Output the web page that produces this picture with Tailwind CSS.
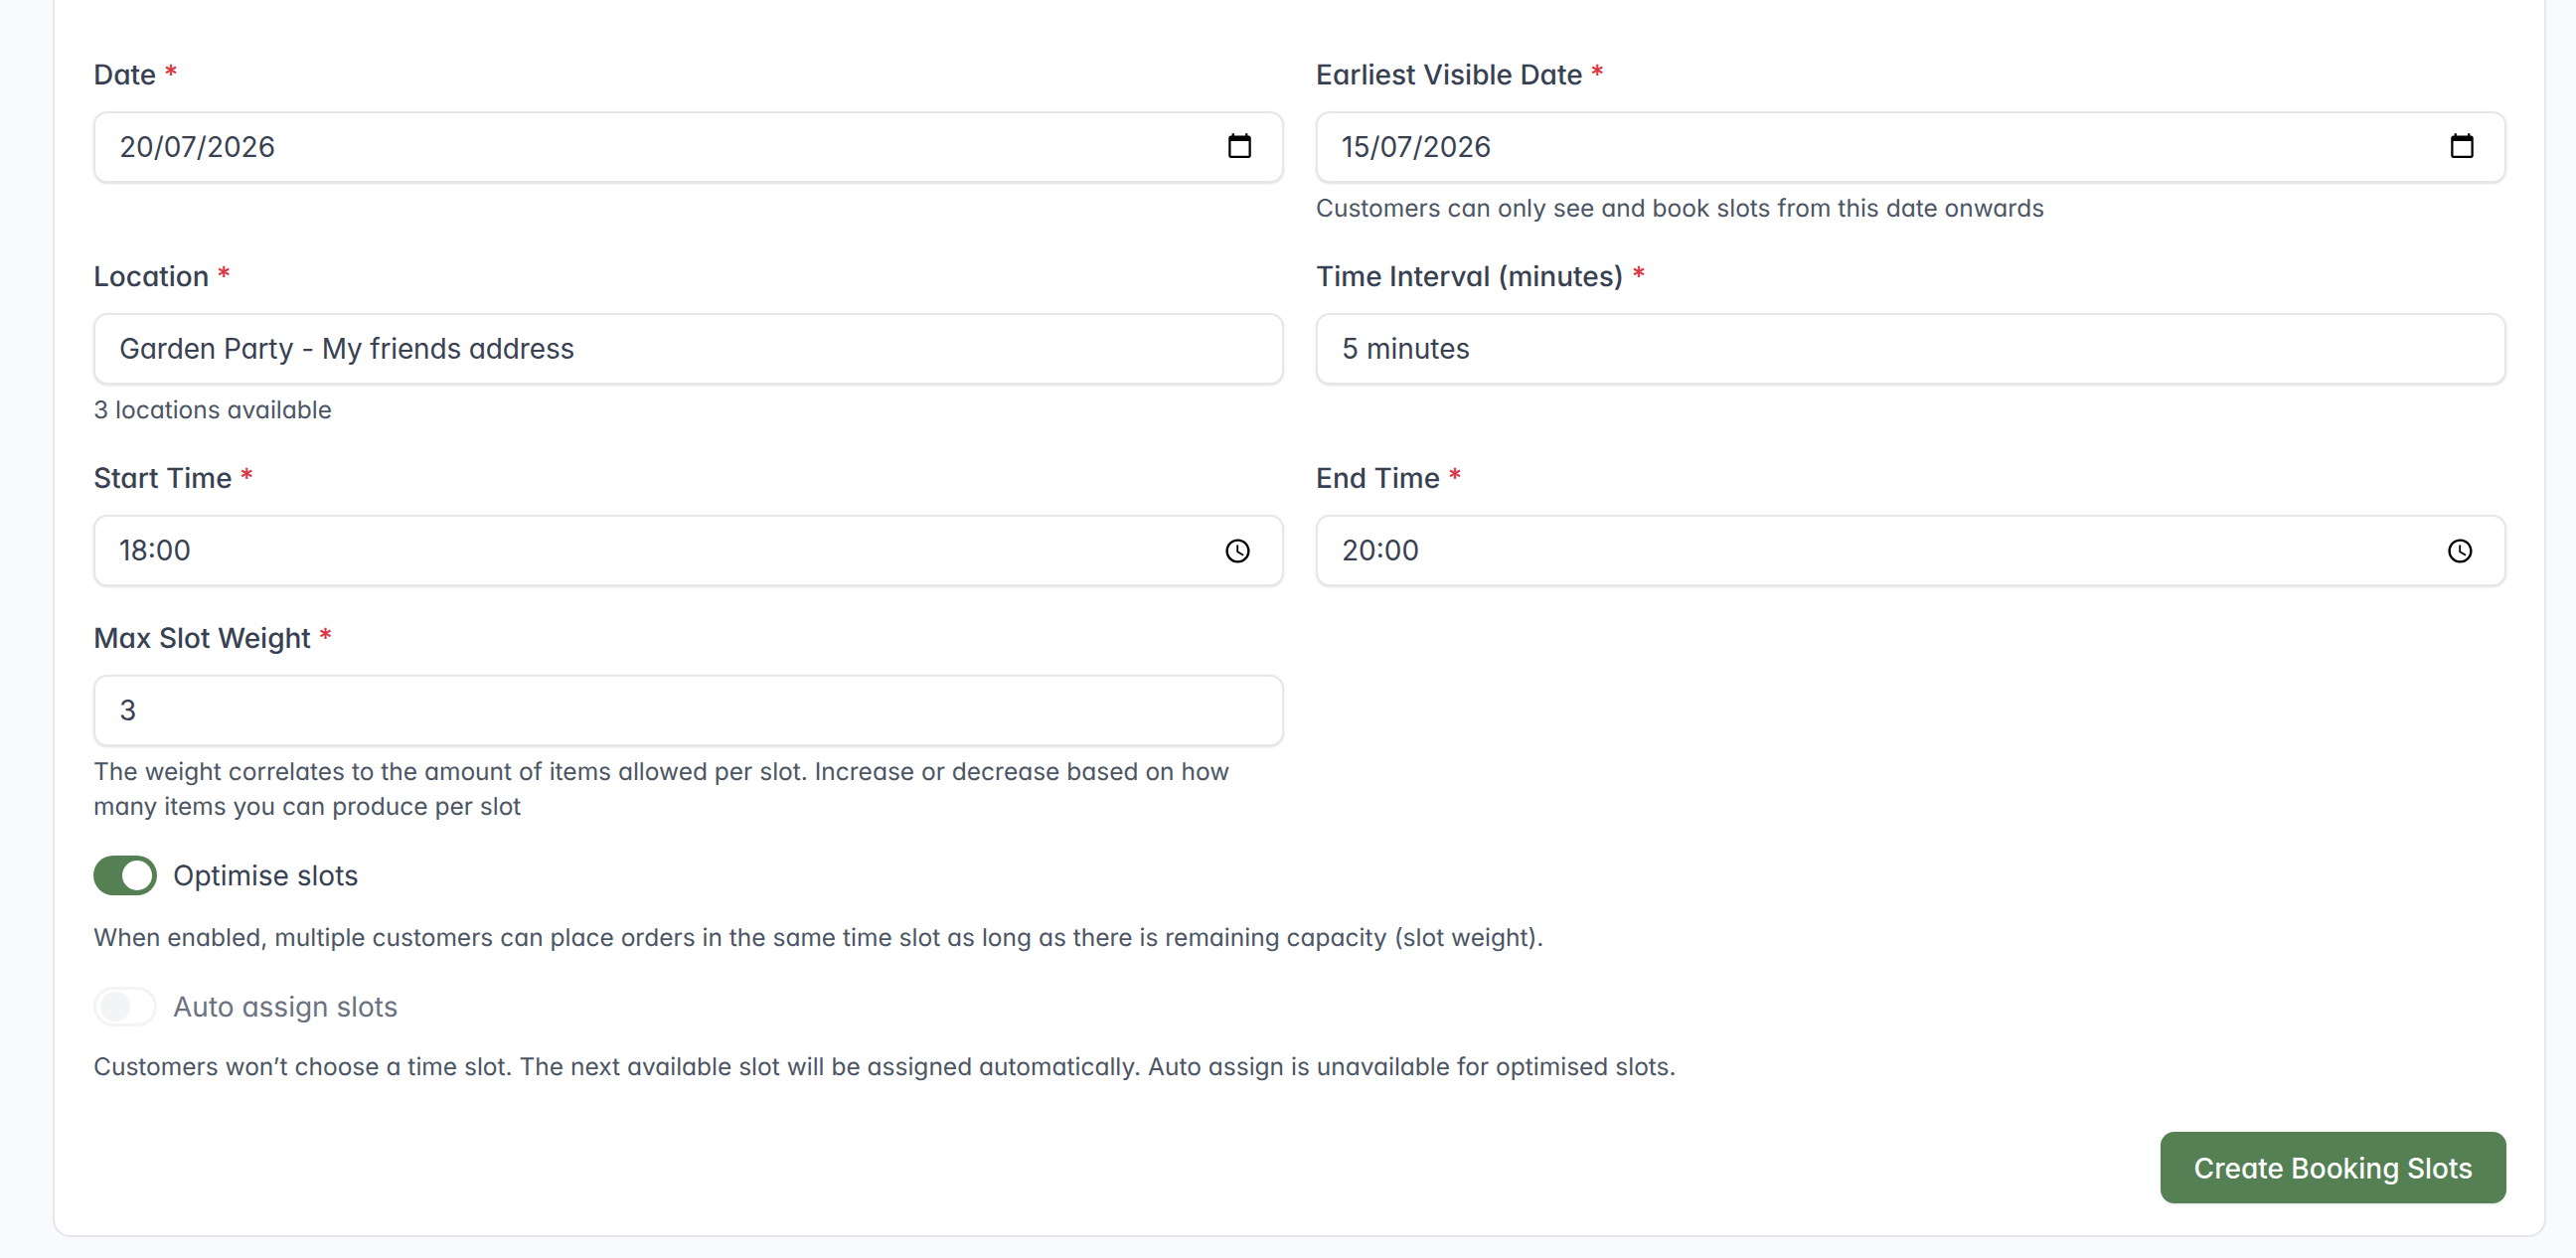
<!DOCTYPE html>
<html lang="en">
<head>
    <meta charset="UTF-8">
    <title>Create Booking Slots</title>
    <script src="https://cdn.jsdelivr.net/npm/@tailwindcss/browser@4"></script>
</head>
<body class="bg-[#f9fafb] h-[1266px] overflow-hidden font-['Inter',sans-serif] [font-feature-settings:'cv11'] [text-rendering:geometricPrecision] text-[#374151]">
    <div class="ml-[53px] mr-[30px] -mt-[20px] h-[1265px] bg-white border-2 border-[#e5e7eb] rounded-[18px] pt-[71px] pl-[39px] pr-[38px]">
        <form>
            <div class="grid grid-cols-2 gap-x-[32px]">
                <!-- Date -->
                <div class="h-[203px]">
                    <label class="block mb-[15px] text-[28px] leading-[44px] font-medium">Date <span class="text-[#dc3545]">*</span></label>
                    <div class="relative">
                        <input type="text" value="20/07/2026" class="w-full h-[72px] px-[24px] text-[28px] bg-white border-2 border-[#e5e7eb] rounded-[14px] shadow-sm">
                        <svg class="absolute right-[31px] top-[21px] w-[27px] h-[27px]" viewBox="0 0 24 24" fill="#000"><path d="M20 3h-1V1h-2v2H7V1H5v2H4c-1.1 0-2 .9-2 2v16c0 1.1.9 2 2 2h16c1.1 0 2-.9 2-2V5c0-1.1-.9-2-2-2zm0 18H4V8h16v13z"/></svg>
                    </div>
                </div>
                <!-- Earliest visible date -->
                <div class="h-[203px]">
                    <label class="block mb-[15px] text-[28px] leading-[44px] font-medium">Earliest Visible Date <span class="text-[#dc3545]">*</span></label>
                    <div class="relative">
                        <input type="text" value="15/07/2026" class="w-full h-[72px] px-[24px] text-[28px] bg-white border-2 border-[#e5e7eb] rounded-[14px] shadow-sm">
                        <svg class="absolute right-[31px] top-[21px] w-[27px] h-[27px]" viewBox="0 0 24 24" fill="#000"><path d="M20 3h-1V1h-2v2H7V1H5v2H4c-1.1 0-2 .9-2 2v16c0 1.1.9 2 2 2h16c1.1 0 2-.9 2-2V5c0-1.1-.9-2-2-2zm0 18H4V8h16v13z"/></svg>
                    </div>
                    <p class="mt-[8px] text-[24.5px] leading-[35px] text-[#4b5563]">Customers can only see and book slots from this date onwards</p>
                </div>
                <!-- Location -->
                <div class="h-[203px]">
                    <label class="block mb-[15px] text-[28px] leading-[44px] font-medium">Location <span class="text-[#dc3545]">*</span></label>
                    <input type="text" value="Garden Party - My friends address" class="w-full h-[72px] px-[24px] text-[28px] tracking-[-0.15px] bg-white border-2 border-[#e5e7eb] rounded-[14px] shadow-sm">
                    <p class="mt-[8px] text-[24.5px] leading-[35px] text-[#4b5563]">3 locations available</p>
                </div>
                <!-- Interval -->
                <div class="h-[203px]">
                    <label class="block mb-[15px] text-[28px] leading-[44px] font-medium">Time Interval (minutes) <span class="text-[#dc3545]">*</span></label>
                    <input type="text" value="5 minutes" class="w-full h-[72px] px-[24px] text-[28px] bg-white border-2 border-[#e5e7eb] rounded-[14px] shadow-sm">
                </div>
                <!-- Start -->
                <div class="h-[161px]">
                    <label class="block mb-[15px] text-[28px] leading-[44px] font-medium">Start Time <span class="text-[#dc3545]">*</span></label>
                    <div class="relative">
                        <input type="text" value="18:00" class="w-full h-[72px] px-[24px] text-[28px] bg-white border-2 border-[#e5e7eb] rounded-[14px] shadow-sm">
                        <svg class="absolute right-[32px] top-[22px] w-[29px] h-[29px]" viewBox="0 0 24 24" fill="#000"><path d="M11.99 2C6.47 2 2 6.48 2 12s4.47 10 9.99 10C17.52 22 22 17.52 22 12S17.52 2 11.99 2zM12 20c-4.42 0-8-3.58-8-8s3.58-8 8-8 8 3.58 8 8-3.58 8-8 8zm.5-13H11v6l5.25 3.15.75-1.23-4.5-2.67z"/></svg>
                    </div>
                </div>
                <!-- End -->
                <div class="h-[161px]">
                    <label class="block mb-[15px] text-[28px] leading-[44px] font-medium">End Time <span class="text-[#dc3545]">*</span></label>
                    <div class="relative">
                        <input type="text" value="20:00" class="w-full h-[72px] px-[24px] text-[28px] bg-white border-2 border-[#e5e7eb] rounded-[14px] shadow-sm">
                        <svg class="absolute right-[32px] top-[22px] w-[29px] h-[29px]" viewBox="0 0 24 24" fill="#000"><path d="M11.99 2C6.47 2 2 6.48 2 12s4.47 10 9.99 10C17.52 22 22 17.52 22 12S17.52 2 11.99 2zM12 20c-4.42 0-8-3.58-8-8s3.58-8 8-8 8 3.58 8 8-3.58 8-8 8zm.5-13H11v6l5.25 3.15.75-1.23-4.5-2.67z"/></svg>
                    </div>
                </div>
                <!-- Weight -->
                <div>
                    <label class="block mb-[15px] text-[28px] leading-[44px] font-medium">Max Slot Weight <span class="text-[#dc3545]">*</span></label>
                    <input type="text" value="3" class="w-full h-[72px] px-[24px] text-[28px] bg-white border-2 border-[#e5e7eb] rounded-[14px] shadow-sm">
                    <p class="mt-[8px] text-[24.5px] leading-[35px] text-[#4b5563]">The weight correlates to the amount of items allowed per slot. Increase or decrease based on how many items you can produce per slot</p>
                </div>
            </div>

            <div class="mt-[32px] flex items-center gap-[16px] h-[40px]">
                <div class="w-[64px] h-[40px] rounded-full bg-[#548054] flex items-center justify-end pr-[5px]">
                    <div class="w-[30px] h-[30px] rounded-full bg-white"></div>
                </div>
                <span class="text-[28px]">Optimise slots</span>
            </div>
            <p class="mt-[25px] text-[24.5px] leading-[35px] text-[#4b5563]">When enabled, multiple customers can place orders in the same time slot as long as there is remaining capacity (slot weight).</p>

            <div class="mt-[32px] flex items-center gap-[16px] h-[40px]">
                <div class="w-[64px] h-[40px] rounded-full bg-white border-[3px] border-[#f3f4f6] flex items-center pl-[4px]">
                    <div class="w-[30px] h-[30px] rounded-full bg-[#f3f4f6]"></div>
                </div>
                <span class="text-[28px] text-[#6b7280]">Auto assign slots</span>
            </div>
            <p class="mt-[23px] text-[24.5px] leading-[35px] text-[#4b5563]">Customers won’t choose a time slot. The next available slot will be assigned automatically. Auto assign is unavailable for optimised slots.</p>

            <div class="flex justify-end mt-[48px]">
                <button type="button" class="w-[348px] h-[72px] pt-[2px] bg-[#548054] text-white text-[28px] font-medium rounded-[14px] shadow-sm">Create Booking Slots</button>
            </div>
        </form>
    </div>
</body>
</html>
